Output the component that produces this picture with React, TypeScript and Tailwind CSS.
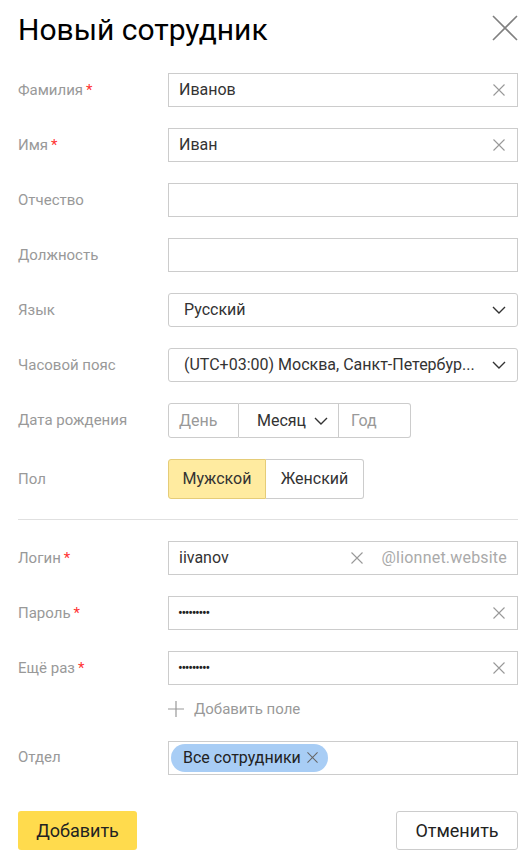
import React from "react";

const font = { fontFamily: "Roboto, 'Noto Sans', sans-serif" };

function Cross({ size = 12, className = "" }: { size?: number; className?: string }) {
  return (
    <svg width={size} height={size} viewBox="0 0 12 12" className={className}>
      <path d="M0.5 0.5L11.5 11.5M11.5 0.5L0.5 11.5" stroke="currentColor" strokeWidth="1.1" />
    </svg>
  );
}

function Chevron({ className = "" }: { className?: string }) {
  return (
    <svg width="14" height="8" viewBox="0 0 14 8" className={className}>
      <path d="M1 1L7 7L13 1" fill="none" stroke="currentColor" strokeWidth="1.4" />
    </svg>
  );
}

function Label({ text, required }: { text: string; required?: boolean }) {
  return (
    <div className="w-[150px] shrink-0 text-[15px] text-[#999]">
      {text}
      {required && <span className="text-[#f33] ml-[3px]">*</span>}
    </div>
  );
}

function Row({ children, label, required }: { children: React.ReactNode; label: string; required?: boolean }) {
  return (
    <div className="flex items-center">
      <Label text={label} required={required} />
      <div className="flex-1">{children}</div>
    </div>
  );
}

function TextInput({ value, clear }: { value?: string; clear?: boolean }) {
  return (
    <div className="h-[34px] border border-[#ccc] flex items-center pl-[10px] pr-[12px] text-[16px] text-[#333]">
      <span className="flex-1">{value}</span>
      {clear && <Cross className="text-[#999]" />}
    </div>
  );
}

function Select({ value }: { value: string }) {
  return (
    <div className="h-[34px] border border-[#ccc] rounded-[3px] flex items-center pl-[15px] pr-[11px] text-[16px] text-[#333]">
      <span className="flex-1 whitespace-nowrap">{value}</span>
      <Chevron className="text-[#333] ml-[12px] shrink-0" />
    </div>
  );
}

function Dots() {
  return <span className="text-[14px] tracking-[-1.3px] text-[#222]">•••••••••</span>;
}

export default function App() {
  return (
    <div className="w-[531px] h-[859px] bg-white pl-[18px] pr-[13px] pt-[11px]" style={font}>
      <div className="flex items-start justify-between">
        <h1 className="text-[30px] leading-[38px] text-black">Новый сотрудник</h1>
        <button className="mt-[4px] text-[#808080]">
          <svg width="26" height="26" viewBox="0 0 26 26">
            <path d="M1 1L25 25M25 1L1 25" stroke="currentColor" strokeWidth="1.6" />
          </svg>
        </button>
      </div>

      <div className="mt-[24px] flex flex-col gap-[21px]">
        <Row label="Фамилия" required>
          <TextInput value="Иванов" clear />
        </Row>
        <Row label="Имя" required>
          <TextInput value="Иван" clear />
        </Row>
        <Row label="Отчество">
          <TextInput />
        </Row>
        <Row label="Должность">
          <TextInput />
        </Row>
        <Row label="Язык">
          <Select value="Русский" />
        </Row>
        <Row label="Часовой пояс">
          <Select value="(UTC+03:00) Москва, Санкт-Петербур..." />
        </Row>
        <Row label="Дата рождения">
          <div className="flex h-[35px] text-[16px]">
            <div className="w-[71px] border border-[#ccc] rounded-l-[3px] flex items-center pl-[10px] text-[#999]">День</div>
            <div className="w-[100px] border-y border-r border-[#ccc] flex items-center pl-[18px] text-[#333]">
              Месяц
              <Chevron className="ml-[8px] text-[#333]" />
            </div>
            <div className="w-[72px] border-y border-r border-[#ccc] rounded-r-[3px] flex items-center pl-[12px] text-[#999]">Год</div>
          </div>
        </Row>
        <Row label="Пол">
          <div className="flex h-[40px] text-[16px] text-[#333]">
            <div className="w-[98px] bg-[#ffeba0] border border-[#e5cc78] rounded-l-[3px] flex items-center justify-center">Мужской</div>
            <div className="w-[98px] border-y border-r border-[#ccc] rounded-r-[3px] flex items-center justify-center">Женский</div>
          </div>
        </Row>
      </div>

      <div className="mt-[20px] mb-[21px] border-t border-[#e0e0e0]" />

      <div className="flex flex-col gap-[21px]">
        <Row label="Логин" required>
          <div className="h-[34px] border border-[#ccc] flex items-center pl-[10px] pr-[10px] text-[16px]">
            <span className="flex-1 text-[#333]">iivanov</span>
            <Cross className="text-[#999] mr-[19px]" />
            <span className="text-[#aaa] tracking-[0.2px]">@lionnet.website</span>
          </div>
        </Row>
        <Row label="Пароль" required>
          <div className="h-[34px] border border-[#ccc] flex items-center pl-[9px] pr-[12px]">
            <span className="flex-1"><Dots /></span>
            <Cross className="text-[#999]" />
          </div>
        </Row>
        <Row label="Ещё раз" required>
          <div className="h-[34px] border border-[#ccc] flex items-center pl-[9px] pr-[12px]">
            <span className="flex-1"><Dots /></span>
            <Cross className="text-[#999]" />
          </div>
        </Row>
      </div>

      <div className="ml-[150px] mt-[13px] flex items-center gap-[10px] text-[15px] text-[#999]">
        <svg width="16" height="16" viewBox="0 0 16 16" className="text-[#999]">
          <path d="M8 0V16M0 8H16" stroke="currentColor" strokeWidth="1.2" />
        </svg>
        Добавить поле
      </div>

      <div className="mt-[20px]">
        <Row label="Отдел">
          <div className="h-[34px] border border-[#ccc] flex items-center pl-[2px]">
            <div className="h-[28px] rounded-full bg-[#a8cdf5] flex items-center pl-[12px] pr-[10px] text-[16px] text-[#222] gap-[6px]">
              Все сотрудники
              <Cross size={11} className="text-[#666]" />
            </div>
          </div>
        </Row>
      </div>

      <div className="mt-[36px] flex justify-between">
        <button className="h-[39px] w-[119px] rounded-[3px] bg-[#ffdb4d] text-[18px] text-[#222]">Добавить</button>
        <button className="h-[39px] w-[122px] rounded-[3px] border border-[#ccc] bg-white text-[18px] text-[#222]">Отменить</button>
      </div>
    </div>
  );
}
